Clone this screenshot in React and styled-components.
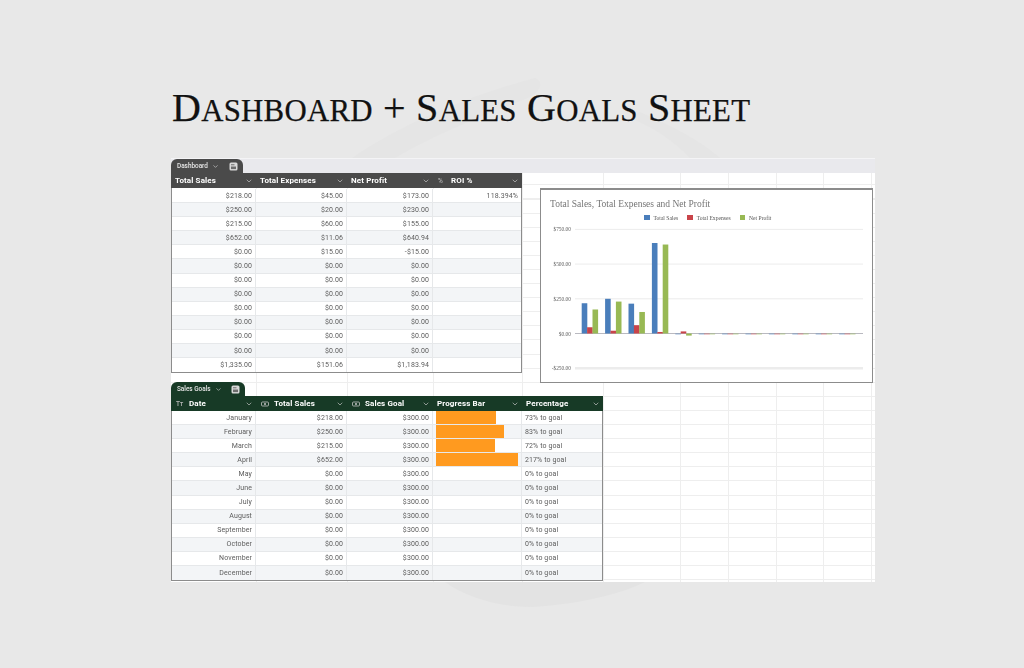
import React from 'react';
import styled, { createGlobalStyle } from 'styled-components';
import { ChevronDown } from 'lucide-react';

const GlobalStyle = createGlobalStyle`
  html, body {
    margin: 0;
    background: #e8e8e8;
  }
`;

const Page = styled.div`
  position: relative;
  width: 1024px;
  height: 668px;
  padding: 83px 0 0 171px;
  box-sizing: border-box;
  overflow: hidden;
  background: #e8e8e8;
`;

const Watermark = styled.svg`
  position: absolute;
  inset: 0;
`;

const Title = styled.h1`
  position: relative;
  margin: 0 0 22px 1px;
  font-family: 'Liberation Serif', serif;
  font-size: 40px;
  font-weight: 400;
  letter-spacing: 0.27px;
  line-height: 49px;
  color: #111;
  white-space: nowrap;
  -webkit-text-stroke: 0.25px #111;
`;

const SmallCaps = styled.span`
  font-size: 0.77em;
  text-transform: uppercase;
`;

const Sheet = styled.div`
  position: relative;
  width: 704px;
  height: 424px;
  filter: blur(0.3px);
  background-color: #fff;
  background-image:
    linear-gradient(#eee, #eee), linear-gradient(#eee, #eee),
    linear-gradient(#eee, #eee), linear-gradient(#eee, #eee),
    linear-gradient(#eee, #eee), linear-gradient(#eee, #eee),
    linear-gradient(#eee, #eee), linear-gradient(#eee, #eee),
    linear-gradient(#eee, #eee), linear-gradient(#eee, #eee),
    repeating-linear-gradient(to bottom, #eee 12.3px, #eee 13.3px, transparent 13.3px, transparent 26.4px);
  background-size: 1px 100%, 1px 100%, 1px 100%, 1px 100%, 1px 100%, 1px 100%, 1px 100%, 1px 100%, 1px 100%, 1px 100%, 100% 100%;
  background-repeat: no-repeat;
  background-position: 85px 0, 176px 0, 262px 0, 351px 0, 432px 0, 509px 0, 557px 0, 605px 0, 652px 0, 700px 0, 0 0;
`;

const TabStrip = styled.div`
  display: flex;
  align-items: flex-end;
  height: 15px;
  border-top: 1px solid #f4f4f6;
  box-sizing: border-box;
  background: #e9e9ed;
`;

const Tab = styled.div`
  display: flex;
  align-items: center;
  box-sizing: border-box;
  width: ${({ $width }) => $width}px;
  height: 14px;
  padding: 0 5px 0 6px;
  border-radius: 6px 6px 0 0;
  background: ${({ $bg }) => $bg};
  color: #e6e6e6;
  font-family: Roboto, sans-serif;
  font-size: 6.4px;
  font-weight: 500;
`;

const TabChevron = styled(ChevronDown)`
  margin-left: 4px;
  color: #ddd;
`;

const TabCopy = styled.svg`
  margin-left: auto;
`;

const TopRow = styled.div`
  display: flex;
  align-items: flex-start;
`;

const GoalsSection = styled.section`
  width: fit-content;
  margin-top: -1px;
`;

const HeaderRow = styled.div`
  display: grid;
  grid-template-columns: ${({ $cols }) => $cols};
  height: 15px;
  background: ${({ $bg }) => $bg};
`;

const HeaderCell = styled.div`
  display: flex;
  align-items: center;
  min-width: 0;
  padding: 0 3px 0 4px;
  color: #fff;
  font-family: Roboto, sans-serif;
  font-size: 8px;
  font-weight: 700;
  letter-spacing: 0.12px;
  white-space: nowrap;
`;

const TypeIcon = styled.span`
  display: inline-flex;
  width: 12px;
  margin: 0 1px 0 1px;
  color: #b8b8b8;
  font-size: 6.5px;
  font-weight: 500;
`;

const HeaderChevron = styled(ChevronDown)`
  margin-left: auto;
  color: #c8c8c8;
`;

const Body = styled.div`
  padding-top: ${({ $offset }) => $offset || 0}px;
  border: 1px solid #8c8c8c;
  border-top: 0;
`;

const Row = styled.div`
  display: grid;
  grid-template-columns: ${({ $cols }) => $cols};
  height: 14.1px;
  box-sizing: border-box;
  border-bottom: 1px solid #e6e8ea;
  background: ${({ $striped }) => ($striped ? '#f3f5f7' : '#fff')};
  &:last-child {
    border-bottom: 0;
  }
`;

const Cell = styled.div`
  display: flex;
  align-items: center;
  justify-content: ${({ $left }) => ($left ? 'flex-start' : 'flex-end')};
  min-width: 0;
  padding: 0 3px;
  border-right: 1px solid #e6e8ea;
  color: #5c5c5c;
  font-family: Roboto, sans-serif;
  font-size: 7px;
  letter-spacing: 0.1px;
  white-space: nowrap;
  &:last-child {
    border-right: 0;
  }
`;

const BarCell = styled.div`
  padding: 0 3px 0 3px;
  border-right: 1px solid #e6e8ea;
`;

const ProgressFill = styled.div`
  height: 100%;
  background: #ff9a1f;
`;

const ChartCard = styled.div`
  display: flex;
  flex-direction: column;
  box-sizing: border-box;
  width: 333px;
  height: 195px;
  margin: 15px 0 0 18px;
  border: 1px solid #8c8c8c;
  border-top-width: 2px;
  background: #fff;
`;

const ChartTitle = styled.div`
  padding: 8px 0 0 9px;
  color: #757575;
  font-family: 'Liberation Serif', serif;
  font-size: 9.5px;
  line-height: 12px;
  white-space: nowrap;
`;

const Legend = styled.div`
  display: flex;
  align-items: center;
  gap: 9px;
  margin: 3px 0 0 103px;
  height: 9px;
`;

const LegendItem = styled.div`
  display: flex;
  align-items: center;
  gap: 4px;
  color: #555;
  font-family: 'Liberation Serif', serif;
  font-size: 5.6px;
  white-space: nowrap;
`;

const Swatch = styled.span`
  width: 5.5px;
  height: 5.5px;
  background: ${({ $color }) => $color};
`;

const AxisLabel = styled.text`
  fill: #5f5f5f;
  font-family: 'Liberation Serif', serif;
  font-size: 5.4px;
  text-anchor: end;
`;

const DASH_HEADER = '85px 91px 86px 89px';
const DASH_BODY = '84px 91px 86px 88px';
const GOALS_HEADER = '85px 91px 86px 89px 81px';
const GOALS_BODY = '84px 91px 86px 89px 80px';

const BLUE = '#4a7ebb';
const RED = '#c9444a';
const GREEN = '#98b954';

const dashRows = [
  ['$218.00', '$45.00', '$173.00', '118.394%'],
  ['$250.00', '$20.00', '$230.00', ''],
  ['$215.00', '$60.00', '$155.00', ''],
  ['$652.00', '$11.06', '$640.94', ''],
  ['$0.00', '$15.00', '-$15.00', ''],
  ['$0.00', '$0.00', '$0.00', ''],
  ['$0.00', '$0.00', '$0.00', ''],
  ['$0.00', '$0.00', '$0.00', ''],
  ['$0.00', '$0.00', '$0.00', ''],
  ['$0.00', '$0.00', '$0.00', ''],
  ['$0.00', '$0.00', '$0.00', ''],
  ['$0.00', '$0.00', '$0.00', ''],
  ['$1,335.00', '$151.06', '$1,183.94', ''],
];

const goalRows = [
  ['January', '$218.00', 73],
  ['February', '$250.00', 83],
  ['March', '$215.00', 72],
  ['April', '$652.00', 217],
  ['May', '$0.00', 0],
  ['June', '$0.00', 0],
  ['July', '$0.00', 0],
  ['August', '$0.00', 0],
  ['September', '$0.00', 0],
  ['October', '$0.00', 0],
  ['November', '$0.00', 0],
  ['December', '$0.00', 0],
];

const chartSeries = [
  { color: BLUE, values: [218, 250, 215, 652, 0, 0, 0, 0, 0, 0, 0, 0] },
  { color: RED, values: [45, 20, 60, 11, 15, 0, 0, 0, 0, 0, 0, 0] },
  { color: GREEN, values: [173, 230, 155, 641, -15, 0, 0, 0, 0, 0, 0, 0] },
];

const ticks = [
  ['$750.00', 750],
  ['$500.00', 500],
  ['$250.00', 250],
  ['$0.00', 0],
  ['-$250.00', -250],
];

const ZERO_Y = 111.5;
const PX_PER_UNIT = 34.7 / 250;
const valueY = (value) => ZERO_Y - value * PX_PER_UNIT;

const CopyIcon = () => (
  <TabCopy width="9" height="9" viewBox="0 0 9 9">
    <rect x="0.5" y="0.5" width="8" height="8" rx="1.5" fill="#d8d8d8" />
    <rect x="2" y="4.5" width="5" height="2.6" fill="#6c6c6c" />
    <rect x="2" y="2" width="3.5" height="1.4" fill="#8a8a8a" />
  </TabCopy>
);

const MoneyIcon = () => (
  <svg width="8" height="6" viewBox="0 0 8 6">
    <rect x="0.5" y="1" width="7" height="4" rx="1" fill="none" stroke="#c4c4c4" strokeWidth="0.8" />
    <circle cx="4" cy="3" r="1" fill="#c4c4c4" />
  </svg>
);

const SheetHeader = ({ bg, cols, labels }) => (
  <HeaderRow $bg={bg} $cols={cols}>
    {labels.map(({ icon, text }) => (
      <HeaderCell key={text}>
        {icon && <TypeIcon>{icon}</TypeIcon>}
        {text}
        <HeaderChevron size={8} strokeWidth={2} />
      </HeaderCell>
    ))}
  </HeaderRow>
);

const Plot = () => (
  <svg width="331" height="157" viewBox="0 0 331 157">
    {ticks.map(([label, value]) => (
      <g key={label}>
        <AxisLabel x="30" y={valueY(value) + 2}>
          {label}
        </AxisLabel>
        <line
          x1="34"
          x2="322"
          y1={valueY(value)}
          y2={valueY(value)}
          stroke={value === 0 ? '#b9b9c0' : '#ececec'}
          strokeWidth={value === -250 ? 2.5 : 1}
        />
      </g>
    ))}
    {chartSeries.map(({ color, values }, s) =>
      values.map((value, i) => (
        <rect
          key={`${color}-${i}`}
          x={40.7 + i * 23.4 + s * 5.4}
          y={value >= 0 ? valueY(value) : ZERO_Y}
          width="5.6"
          height={Math.max(Math.abs(value) * PX_PER_UNIT, 1)}
          fill={color}
          opacity={value === 0 ? 0.55 : 1}
        />
      )),
    )}
  </svg>
);

const App = () => (
  <Page>
    <GlobalStyle />
    <Watermark width="1024" height="668" viewBox="0 0 1024 668">
      <path d="M352 158 C 400 125 470 95 535 78 C 545 82 540 92 528 98 C 470 120 425 140 395 158 Z" fill="#e5e5e5" />
      <path d="M640 112 C 670 125 700 140 720 158 L 690 158 C 675 142 655 128 630 118 Z" fill="#e5e5e5" />
      <path d="M445 582 C 470 600 510 610 545 606 C 590 602 625 592 645 582 Z" fill="#e3e3e3" />
    </Watermark>
    <Title>
      D<SmallCaps>ashboard</SmallCaps> + S<SmallCaps>ales</SmallCaps> G<SmallCaps>oals</SmallCaps> S
      <SmallCaps>heet</SmallCaps>
    </Title>
    <Sheet>
      <TabStrip>
        <Tab $bg="#4a4a4a" $width={72}>
          Dashboard
          <TabChevron size={7} strokeWidth={2} />
          <CopyIcon />
        </Tab>
      </TabStrip>
      <TopRow>
        <div>
          <SheetHeader
            bg="#4a4a4a"
            cols={DASH_HEADER}
            labels={[
              { text: 'Total Sales' },
              { text: 'Total Expenses' },
              { text: 'Net Profit' },
              { icon: '%', text: 'ROI %' },
            ]}
          />
          <Body $offset={1}>
            {dashRows.map((row, r) => (
              <Row key={r} $cols={DASH_BODY} $striped={r % 2 === 1}>
                {row.map((value, c) => (
                  <Cell key={c}>{value}</Cell>
                ))}
              </Row>
            ))}
          </Body>
        </div>
        <ChartCard>
          <ChartTitle>Total Sales, Total Expenses and Net Profit</ChartTitle>
          <Legend>
            <LegendItem>
              <Swatch $color={BLUE} />
              Total Sales
            </LegendItem>
            <LegendItem>
              <Swatch $color={RED} />
              Total Expenses
            </LegendItem>
            <LegendItem>
              <Swatch $color={GREEN} />
              Net Profit
            </LegendItem>
          </Legend>
          <Plot />
        </ChartCard>
      </TopRow>
      <GoalsSection>
        <Tab $bg="#173a26" $width={74}>
          Sales Goals
          <TabChevron size={7} strokeWidth={2} />
          <CopyIcon />
        </Tab>
        <SheetHeader
          bg="#173a26"
          cols={GOALS_HEADER}
          labels={[
            { icon: 'Tт', text: 'Date' },
            { icon: <MoneyIcon />, text: 'Total Sales' },
            { icon: <MoneyIcon />, text: 'Sales Goal' },
            { text: 'Progress Bar' },
            { text: 'Percentage' },
          ]}
        />
        <Body>
          {goalRows.map(([month, sales, percent], r) => (
            <Row key={month} $cols={GOALS_BODY} $striped={r % 2 === 1}>
              <Cell>{month}</Cell>
              <Cell>{sales}</Cell>
              <Cell>$300.00</Cell>
              <BarCell>
                {percent > 0 && <ProgressFill style={{ width: `${Math.min(percent, 100)}%` }} />}
              </BarCell>
              <Cell $left>{percent}% to goal</Cell>
            </Row>
          ))}
        </Body>
      </GoalsSection>
    </Sheet>
  </Page>
);

export default App;
